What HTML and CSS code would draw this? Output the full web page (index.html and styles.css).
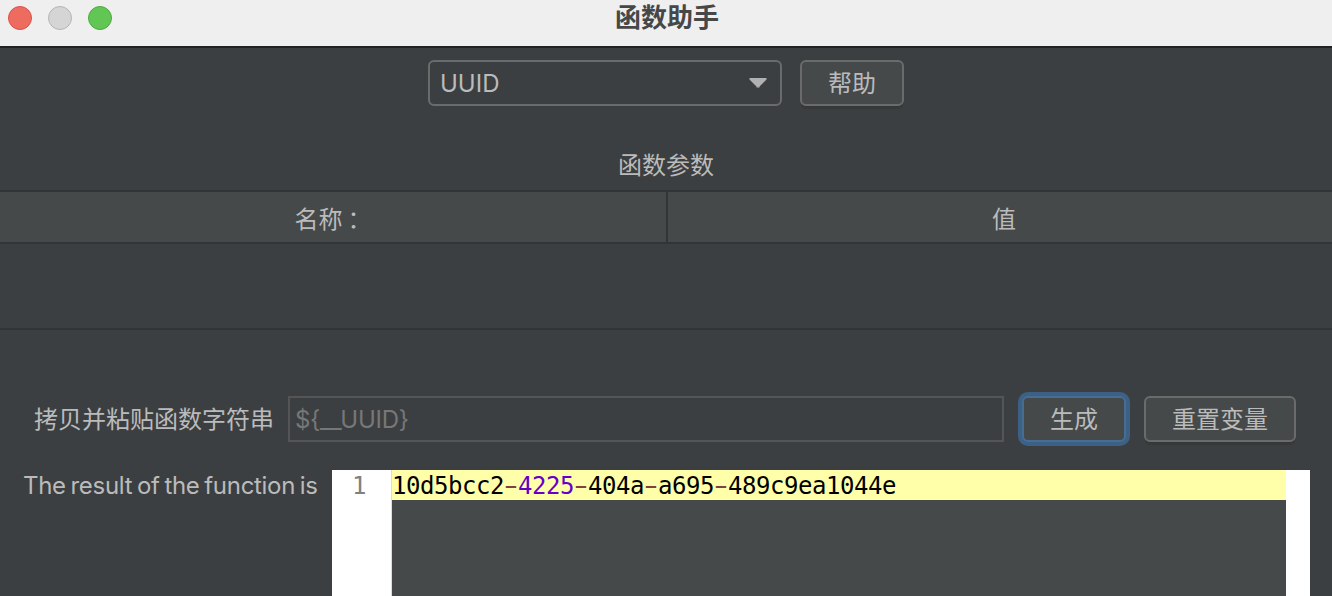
FILE: index.html
```html
<!DOCTYPE html>
<html lang="zh-CN">
<head>
  <meta charset="UTF-8">
  <meta name="viewport" content="width=device-width, initial-scale=1.0">
  <title>函数助手</title>
  <link rel="stylesheet" href="styles.css">
</head>
<body>
  <header class="title-bar">
    <div class="window-buttons">
      <span class="dot dot-close"></span>
      <span class="dot dot-min"></span>
      <span class="dot dot-zoom"></span>
    </div>
    <h1 class="window-title">函数助手</h1>
  </header>

  <div class="toolbar">
    <div class="combo">
      <span class="combo-value">UUID</span>
      <svg class="combo-arrow" width="18" height="10" viewBox="0 0 18 10"><path d="M0.5 0H17.5V1.5L10.5 8.5V9.5H7.5V8.5L0.5 1.5Z" fill="#afb1b3"/></svg>
    </div>
    <button class="btn btn-help">帮助</button>
  </div>

  <h2 class="params-title">函数参数</h2>
  <div class="params-table">
    <div class="params-head">
      <div class="params-col">名称<span class="colon">：</span></div>
      <div class="params-col">值</div>
    </div>
    <div class="params-body"></div>
  </div>

  <div class="copy-row">
    <label class="copy-label">拷贝并粘贴函数字符串</label>
    <div class="copy-field">${__UUID}</div>
    <button class="btn btn-generate">生成</button>
    <button class="btn btn-reset">重置变量</button>
  </div>

  <div class="result-row">
    <div class="result-label">The result of the function is</div>
    <div class="editor">
      <div class="gutter">1</div>
      <div class="code">
        <div class="code-line">10d5bcc2<span class="op">-</span><span class="num">4225</span><span class="op">-</span>404a<span class="op">-</span>a695<span class="op">-</span>489c9ea1044e</div>
      </div>
      <div class="scroll-track"></div>
    </div>
  </div>
</body>
</html>
```
FILE: styles.css
```css
:root {
  --bg: #3c3f41;
  --panel: #45494a;
  --line: #323537;
  --border: #6b6b6b;
  --text: #bbbbbb;
}

* {
  margin: 0;
  padding: 0;
  box-sizing: border-box;
}

body {
  height: 596px;
  overflow: hidden;
  background: var(--bg);
  color: var(--text);
  font-family: Inter, 'Noto Sans CJK SC', sans-serif;
  font-size: 24px;
  line-height: 36px;
}

.title-bar {
  display: grid;
  grid-template-columns: 1fr auto 1fr;
  height: 48px;
  padding-left: 8px;
  background: #efefef;
  border-bottom: 2px solid #202325;
}

.window-buttons {
  display: flex;
  gap: 16px;
  padding-top: 6px;
}

.dot {
  width: 24px;
  height: 24px;
  border-radius: 50%;
  border: 1px solid;
}

.dot-close {
  background: #ed6b5f;
  border-color: #d9534a;
}

.dot-min {
  background: #d5d5d5;
  border-color: #b5b5b5;
}

.dot-zoom {
  background: #62c655;
  border-color: #52a843;
}

.window-title {
  margin-left: -6px;
  font-size: 26px;
  line-height: 36px;
  font-weight: 700;
  color: #474747;
}

.toolbar {
  display: flex;
  justify-content: center;
  gap: 18px;
  padding-top: 12px;
}

.combo {
  display: flex;
  align-items: center;
  justify-content: space-between;
  width: 354px;
  height: 46px;
  padding: 0 13px 0 10px;
  border: 2px solid var(--border);
  border-radius: 6px;
}

.combo-value {
  padding-top: 2px;
}

.btn {
  height: 46px;
  padding-top: 1px;
  border: 2px solid var(--border);
  border-radius: 6px;
  background: var(--panel);
  box-shadow: 0 4px 0 -1px #36393a;
  color: var(--text);
  font: inherit;
}

.btn-help {
  width: 104px;
}

.params-title {
  margin-top: 42px;
  height: 42px;
  font-size: 24px;
  font-weight: 400;
  text-align: center;
}

.params-table {
  border-top: 2px solid var(--line);
  border-bottom: 2px solid var(--line);
}

.params-head {
  display: flex;
  height: 52px;
  background: var(--panel);
  border-bottom: 2px solid var(--line);
}

.params-col {
  flex: 1;
  padding: 10px 0 0 8px;
  text-align: center;
}

.params-col:first-child {
  flex: 0 0 668px;
  padding-left: 0;
  border-right: 2px solid var(--line);
}

.colon {
  padding-left: 5px;
}

.params-body {
  height: 84px;
}

.copy-row {
  display: flex;
  margin-top: 66px;
  padding-left: 34px;
}

.copy-label {
  width: 254px;
  line-height: 47px;
  height: 46px;
}

.copy-field {
  width: 716px;
  height: 46px;
  padding-left: 5px;
  border: 2px solid #555555;
  line-height: 44px;
  letter-spacing: -0.3px;
  color: #777777;
}

.btn-generate {
  width: 104px;
  margin: 0 18px;
  border-color: #466d94;
  box-shadow: 0 0 0 4px #3d6185;
}

.btn-reset {
  width: 152px;
}

.result-row {
  display: flex;
  height: 126px;
  margin-top: 28px;
  padding: 0 22px 0 23px;
}

.result-label {
  width: 309px;
  line-height: 32px;
  letter-spacing: -0.3px;
  word-spacing: -1.7px;
  white-space: nowrap;
}

.editor {
  display: flex;
  flex: 1;
  background: #ffffff;
  font-family: 'DejaVu Sans Mono', monospace;
  line-height: 32px;
}

.gutter {
  width: 60px;
  padding-left: 20px;
  border-right: 1px solid #dddddd;
  color: #808080;
}

.code {
  flex: 1;
  background: var(--panel);
}

.code-line {
  height: 30px;
  background: #ffffaa;
  color: #000000;
  letter-spacing: -0.45px;
}

.num {
  color: #6400c8;
}

.op {
  display: inline-block;
  width: 8px;
  margin: 0 3px;
  height: 30px;
  line-height: 30px;
  vertical-align: top;
  font-family: 'Liberation Sans', sans-serif;
  letter-spacing: 0;
  color: #804040;
  transform: scaleX(1.75);
}

.scroll-track {
  width: 24px;
}
```
